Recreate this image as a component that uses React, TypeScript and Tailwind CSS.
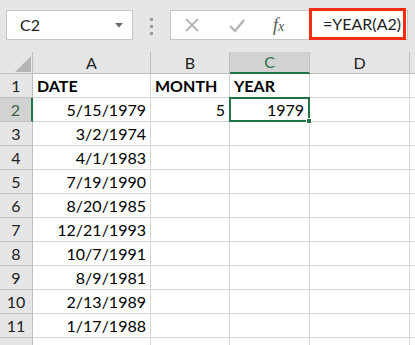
const cols = ["A", "B", "C", "D", ""];
const dates = [
  "5/15/1979",
  "3/2/1974",
  "4/1/1983",
  "7/19/1990",
  "8/20/1985",
  "12/21/1993",
  "10/7/1991",
  "8/9/1981",
  "2/13/1989",
  "1/17/1988",
];

const font = { fontFamily: "Lato, 'Open Sans', sans-serif" };

function CornerCell() {
  return (
    <div className="relative h-[22px] border-r border-b border-[#bfbfbf] bg-[#e6e6e6]">
      <svg className="absolute left-[15px] top-[4px]" width="16" height="16" viewBox="0 0 16 16">
        <polygon points="16,0 16,16 0,16" fill="#b4b4b4" />
      </svg>
    </div>
  );
}

function ColHeader({ label, active }: { label: string; active?: boolean }) {
  return (
    <div
      className={
        active
          ? "flex h-[22px] items-center justify-center border-r border-b-2 border-r-[#bfbfbf] border-b-[#217346] bg-[#d2d2d2] text-[16px] text-[#217346]"
          : "flex h-[22px] items-center justify-center border-r border-b border-[#bfbfbf] bg-[#e6e6e6] text-[16px] text-[#222]"
      }
    >
      {label}
    </div>
  );
}

function RowHeader({ n, active }: { n?: number; active?: boolean }) {
  return (
    <div
      className={
        active
          ? "flex h-[24px] items-center justify-center border-r-2 border-b border-r-[#217346] border-b-[#bfbfbf] bg-[#d2d2d2] text-[16px] text-[#3b5f48]"
          : "flex h-[24px] items-center justify-center border-r border-b border-[#bfbfbf] bg-[#e6e6e6] text-[16px] text-[#222]"
      }
    >
      {n}
    </div>
  );
}

function Cell({ children, right, bold }: { children?: React.ReactNode; right?: boolean; bold?: boolean }) {
  return (
    <div
      className={`flex h-[24px] items-center overflow-hidden whitespace-nowrap border-r border-b border-[#d4d4d4] bg-white px-[4px] text-[16px] text-black ${
        right ? "justify-end" : ""
      } ${bold ? "font-bold" : ""}`}
    >
      {children}
    </div>
  );
}

export default function App() {
  const rows = Array.from({ length: 12 }, (_, i) => i + 1);
  return (
    <div className="h-[345px] w-[415px] overflow-hidden bg-white" style={font}>
      <div className="flex h-[52px] items-start bg-[#e6e6e6] pt-[10px]">
        <div className="ml-[6px] flex h-[30px] w-[127px] items-center justify-between border border-[#c6c6c6] bg-white pl-[13px] pr-[9px]">
          <span className="text-[16px] text-[#222]">C2</span>
          <svg width="8" height="5" viewBox="0 0 8 5">
            <polygon points="0,0 8,0 4,4.5" fill="#6a6a6a" />
          </svg>
        </div>
        <div className="ml-[17px] mt-[8px] flex flex-col gap-[4px]">
          <div className="h-[3px] w-[3px] bg-[#9a9a9a]" />
          <div className="h-[3px] w-[3px] bg-[#9a9a9a]" />
          <div className="h-[3px] w-[3px] bg-[#9a9a9a]" />
        </div>
        <div className="ml-[17px] flex h-[30px] w-[238px] items-center border border-[#c6c6c6] bg-white">
          <svg className="ml-[13px]" width="16" height="16" viewBox="0 0 16 16">
            <path d="M2 2 L14 14 M14 2 L2 14" stroke="#b5b5b5" strokeWidth="1.8" />
          </svg>
          <svg className="ml-[28px]" width="18" height="16" viewBox="0 0 18 16">
            <path d="M2 9 L7 14 L16 3" stroke="#b5b5b5" strokeWidth="2.4" fill="none" />
          </svg>
          <span
            className="ml-[27px] text-[18px] italic text-[#555]"
            style={{ fontFamily: "'Liberation Serif', serif" }}
          >
            f<span className="text-[14px]">x</span>
          </span>
          <div className="-mt-[2px] ml-auto mr-[1px] flex h-[32px] w-[97px] items-center border-[3px] border-[#ff2a10] pl-[11px] text-[16px] text-[#222]">
            =YEAR(A2)
          </div>
        </div>
      </div>
      <div className="grid grid-cols-[33px_118px_79px_80px_100px_1fr]">
        <CornerCell />
        {cols.map((c) => (
          <ColHeader key={c || "e"} label={c} active={c === "C"} />
        ))}
        {rows.map((r) => (
          <RowRow key={r} r={r} />
        ))}
      </div>
    </div>
  );
}

function RowRow({ r }: { r: number }) {
  if (r === 1) {
    return (
      <>
        <RowHeader n={1} />
        <Cell bold>DATE</Cell>
        <Cell bold>MONTH</Cell>
        <Cell bold>YEAR</Cell>
        <Cell />
        <Cell />
      </>
    );
  }
  if (r === 2) {
    return (
      <>
        <RowHeader n={2} active />
        <Cell right>{dates[0]}</Cell>
        <Cell right>5</Cell>
        <div className="relative -ml-[1px] -mt-[1px] flex h-[25px] items-center justify-end border-2 border-[#217346] bg-white pr-[4px] text-[16px]">
          1979
          <div className="absolute -bottom-[4px] -right-[4px] h-[6px] w-[6px] border border-white bg-[#217346]" />
        </div>
        <Cell />
        <Cell />
      </>
    );
  }
  return (
    <>
      <RowHeader n={r < 12 ? r : undefined} />
      <Cell right>{dates[r - 2]}</Cell>
      <Cell />
      <Cell />
      <Cell />
      <Cell />
    </>
  );
}
